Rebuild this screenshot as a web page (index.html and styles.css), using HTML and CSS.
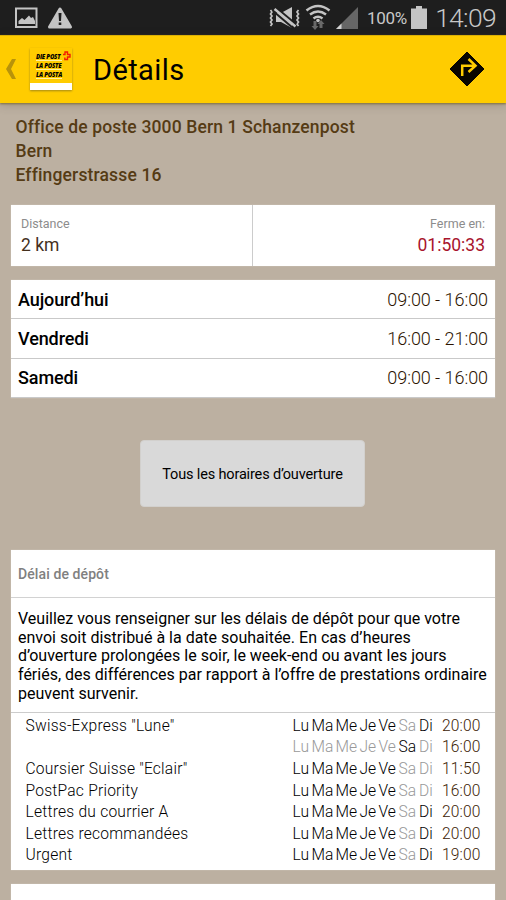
FILE: index.html
```
<!DOCTYPE html>
<html lang="fr">
<head>
<meta charset="utf-8">
<title>Détails</title>
<link rel="stylesheet" href="styles.css">
</head>
<body>
<header class="status">
  <svg class="status-left" width="60" height="24" viewBox="0 0 60 24">
    <path d="M2 2.500h20.500v18.500H2z" fill="none" stroke="#c4c4c4" stroke-width="2"/>
    <path d="M4.500 18v-3l3.500-3 2.500 2 4.500-4.500 2 2.500 2-1 2 4v3z" fill="#c4c4c4"/>
    <path d="M46 3 56.500 21h-21z" fill="#c4c4c4" stroke="#c4c4c4" stroke-width="3" stroke-linejoin="round"/>
    <path d="M44.500 7h3l-.5 8h-2zM44.700 16.500h2.600v2.500h-2.600z" fill="#1e1e1e"/>
  </svg>
  <div class="status-right">
    <svg class="signals" width="92" height="30" viewBox="0 0 92 30">
      <g fill="none" stroke="#c4c4c4" stroke-width="1.700">
        <path d="m2.500 10 1.500 2-1.500 2 1.500 2-1.500 2 1.500 2-1.500 2 1.500 2-1.500 2"/>
        <path d="m30.500 10-1.500 2 1.500 2-1.500 2 1.500 2-1.500 2 1.500 2-1.500 2 1.500 2"/>
      </g>
      <path d="M8 13h5l11-6v21l-11-6H8z" fill="#c4c4c4"/>
      <path d="m7 7 21 17.500" stroke="#1e1e1e" stroke-width="2.500"/>
      <path d="m6.500 9 21 17.500" stroke="#c4c4c4" stroke-width="2.500"/>
      <path d="m5 11 20 17" stroke="#1e1e1e" stroke-width="2"/>
      <g fill="none" stroke="#c4c4c4" stroke-width="2.500">
        <path d="M38.500 10.500q11.500-9 23 0M42 14.500q8-6 16 0M45.500 18.500q4.500-3.500 9 0"/>
      </g>
      <circle cx="50" cy="20.500" r="1.800" fill="#c4c4c4"/>
      <path d="M45.500 21h3v5h2l-3.500 4-3.500-4h2zM51.500 28v-4h-2l3.500-4 3.500 4h-2v4z" fill="#696969"/>
      <path d="M90 7v22H68z" fill="#666"/>
      <path d="M73.500 23.500V29H68z" fill="#d2d2d2"/>
    </svg>
    <span class="percent">100%</span>
    <svg class="battery" width="16" height="24" viewBox="0 0 16 24"><path d="M0 2.500h5V0h6v2.500h5V23H0z" fill="#c4c4c4"/></svg>
    <span class="clock">14:09</span>
  </div>
</header>
<nav class="bar">
  <svg class="back" width="10" height="22" viewBox="0 0 10 22"><path d="M6 1h4L5 11l5 10H6L0 11z" fill="#b8930a"/></svg>
  <div class="logo">
    <span class="brand">DIE POST</span><span class="brand">LA POSTE</span><span class="brand">LA POSTA</span>
    <svg class="cross" width="9" height="10" viewBox="0 0 9 10"><path d="M1 3.500h2V1h2.500v2.500H8V6H5.500v2.500H2.800V6.500" fill="none" stroke="#f21d00" stroke-width="1.400"/></svg>
  </div>
  <h1 class="title">Détails</h1>
  <svg class="route" width="36" height="36" viewBox="0 0 36 36">
    <path d="m18 1 17 17-17 17L1 18z" fill="#080500" stroke="#080500" stroke-linejoin="round"/>
    <path d="M13.200 25V14.700h13M19.500 8l7 6.700-7 6.300" fill="none" stroke="#fc0" stroke-width="2.500"/>
  </svg>
</nav>
<main class="content">
  <address class="address">Office de poste 3000 Bern 1 Schanzenpost<br>Bern<br>Effingerstrasse 16</address>
  <section class="card info">
    <div class="cell"><span class="label">Distance</span><span class="value">2 km</span></div>
    <div class="cell right"><span class="label">Ferme en:</span><span class="value red">01:50:33</span></div>
  </section>
  <section class="card hours">
    <div class="day"><b>Aujourd’hui</b><span>09:00 - 16:00</span></div>
    <div class="day"><b>Vendredi</b><span>16:00 - 21:00</span></div>
    <div class="day"><b>Samedi</b><span>09:00 - 16:00</span></div>
  </section>
  <button class="all">Tous les horaires d’ouverture</button>
  <section class="card deposit">
    <h2 class="heading">Délai de dépôt</h2>
    <p class="note">Veuillez vous renseigner sur les délais de dépôt pour que votre<br>envoi soit distribué à la date souhaitée. En cas d’heures<br>d’ouverture prolongées le soir, le week-end ou avant les jours<br>fériés, des différences par rapport à l’offre de prestations ordinaire<br>peuvent survenir.</p>
    <div class="services">
      <div class="row"><span>Swiss-Express "Lune"</span><i>Lu</i><i>Ma</i><i>Me</i><i>Je</i><i>Ve</i><i class="off">Sa</i><i>Di</i><time>20:00</time></div>
      <div class="row"><span></span><i class="off">Lu</i><i class="off">Ma</i><i class="off">Me</i><i class="off">Je</i><i class="off">Ve</i><i>Sa</i><i class="off">Di</i><time>16:00</time></div>
      <div class="row"><span>Coursier Suisse "Eclair"</span><i>Lu</i><i>Ma</i><i>Me</i><i>Je</i><i>Ve</i><i class="off">Sa</i><i class="off">Di</i><time>11:50</time></div>
      <div class="row"><span>PostPac Priority</span><i>Lu</i><i>Ma</i><i>Me</i><i>Je</i><i>Ve</i><i class="off">Sa</i><i class="off">Di</i><time>16:00</time></div>
      <div class="row"><span>Lettres du courrier A</span><i>Lu</i><i>Ma</i><i>Me</i><i>Je</i><i>Ve</i><i class="off">Sa</i><i>Di</i><time>20:00</time></div>
      <div class="row"><span>Lettres recommandées</span><i>Lu</i><i>Ma</i><i>Me</i><i>Je</i><i>Ve</i><i class="off">Sa</i><i>Di</i><time>20:00</time></div>
      <div class="row"><span>Urgent</span><i>Lu</i><i>Ma</i><i>Me</i><i>Je</i><i>Ve</i><i class="off">Sa</i><i>Di</i><time>19:00</time></div>
    </div>
  </section>
  <section class="card next"></section>
</main>
</body>
</html>
```
FILE: styles.css
```
* { box-sizing: border-box; }
body {
  margin: 0;
  height: 900px;
  overflow: hidden;
  background: #bcb0a1;
  color: #000;
  font-family: Roboto, "Liberation Sans", sans-serif;
}
svg { display: block; flex: none; }
.status {
  display: flex;
  justify-content: space-between;
  height: 35px;
  padding: 6px 10px 0 14px;
  background: #1e1e1e;
  color: #c8c8c8;
}
.status-right { display: flex; }
.signals { margin-top: -6px; }
.percent { margin-left: 7px; width: 41px; font-size: 17px; line-height: 25px; white-space: nowrap; letter-spacing: -.3px; }
.battery { margin-left: 3px; }
.clock { width: 69px; text-align: right; font-size: 26.500px; font-weight: 300; line-height: 24px; letter-spacing: -.7px; }
.bar {
  display: flex;
  align-items: center;
  height: 68px;
  padding: 0 21px 0 6px;
  background: #fc0;
  border-top: 1px solid #dcb005;
  position: relative;
  z-index: 1;
  box-shadow: 0 1px 2px #80703f, 0 2px 9px rgba(70, 60, 50, .25);
}
.back { margin-bottom: 1px; }
.logo {
  position: relative;
  width: 42px;
  height: 42px;
  margin: 0 0 1px 14px;
  padding: 6px 0 0 6px;
  background: #fc0;
  border-bottom: 7px solid #fff;
  box-shadow: 0 1px 2px #a38817;
}
.brand {
  display: block;
  width: 26px;
  height: 7px;
  margin-bottom: 2px;
  font: italic 800 6px/6px "Open Sans", Roboto, sans-serif;
  letter-spacing: -.2px;
  white-space: nowrap;
  border-bottom: 1px solid #fff0a0;
}
.cross { position: absolute; left: 32px; top: 3px; }
.title { margin: 0 0 0 21px; flex: 1; font-size: 29px; font-weight: 400; line-height: 36px; letter-spacing: .4px; }
.route { margin-bottom: 1px; }
.content { padding: 12px 11px 0; display: flex; flex-direction: column; }
.address {
  padding: 1px 0 0 4.500px;
  height: 90px;
  font: 500 17.500px/23.800px Roboto, sans-serif;
  letter-spacing: .14px;
  color: #553b14;
}
.card { background: #fff; box-shadow: 0 0 1px #ddd5cc; }
.info { display: flex; height: 61px; }
.cell { flex: 1; display: flex; flex-direction: column; padding: 11px 10px 0; }
.cell:first-child { flex: 0 0 241px; }
.right { align-items: flex-end; border-left: 1px solid #ccc; }
.label { font-size: 12.500px; line-height: 16px; color: #8c8c8c; }
.value { font-size: 17.500px; line-height: 26px; color: #44301d; }
.value.red { color: #a8142c; }
.hours { margin-top: 14px; }
.day {
  display: flex;
  justify-content: space-between;
  align-items: center;
  height: 39.300px;
  padding: 0 7px;
  border-bottom: 1px solid #c9c9c9;
  font-size: 18px;
  color: #2c1400;
}
.day span { font-weight: 300; letter-spacing: -.05px; }
.day b { font-weight: 500; color: #000; letter-spacing: -.1px; }
.all {
  align-self: center;
  width: 225px;
  height: 67px;
  margin: 42px 1px 0 0;
  padding: 3px 0 0;
  border: 1px solid #d2d0cd;
  border-radius: 4px;
  background: #d9d9d9;
  color: #000;
  font: 400 14.500px Roboto, sans-serif;
  letter-spacing: -.16px;
}
.deposit { height: 320px; margin-top: 43px; }
.heading { margin: 0; height: 48px; padding-left: 7px; font-size: 14px; font-weight: 500; line-height: 49px; letter-spacing: .1px; color: #808080; border-bottom: 1px solid #d2d2d2; }
.note { margin: 0; height: 115px; padding: 12px 0 0 7px; font-size: 16px; line-height: 18.800px; white-space: nowrap; border-bottom: 1px solid #ccc; }
.row {
  display: grid;
  grid-template-columns: 267px 19px 24px 24px 19px 20px 20.500px 23px 40px;
  height: 21.600px;
  padding-left: 14.500px;
  font-size: 15.600px;
  font-weight: 300;
  line-height: 26px;
  white-space: nowrap;
}
.row span { letter-spacing: .22px; }
.row i { font-style: normal; }
.row .off { color: #999; }
.row time { color: #3c2204; letter-spacing: .15px; }
.next { height: 30px; margin-top: 14px; }
```
